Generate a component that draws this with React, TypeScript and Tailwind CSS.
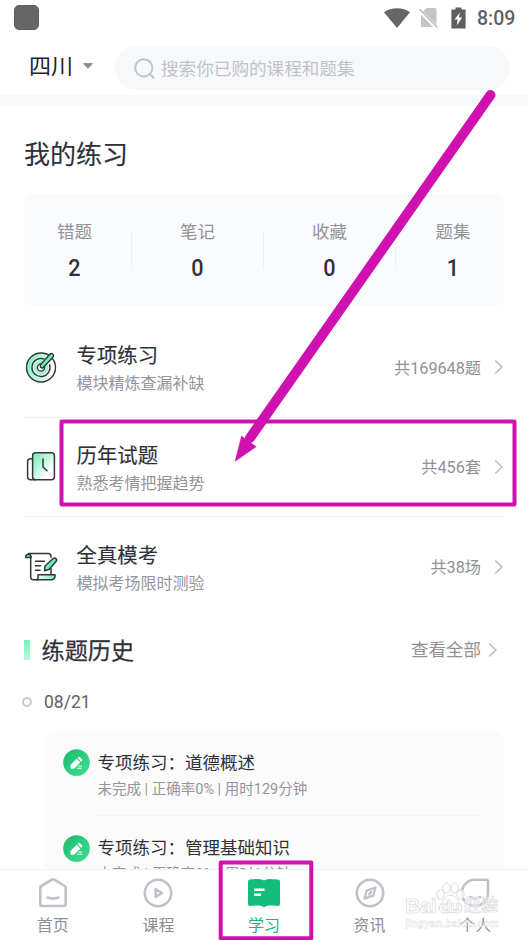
import React from "react";

const stats = [
  { label: "错题", value: 2, width: "w-[108px]", pad: "pr-1.5" },
  { label: "笔记", value: 0, width: "w-[132px]", pad: "" },
  { label: "收藏", value: 0, width: "w-[132px]", pad: "" },
  { label: "题集", value: 1, width: "w-[108px]", pad: "pl-1.5" },
];

const practices = [
  { title: "专项练习", desc: "模块精炼查漏补缺", count: "共169648题", icon: <TargetIcon /> },
  { title: "历年试题", desc: "熟悉考情把握趋势", count: "共456套", icon: <PaperIcon /> },
  { title: "全真模考", desc: "模拟考场限时测验", count: "共38场", icon: <ScrollIcon /> },
];

const history = [
  { title: "专项练习：道德概述", desc: "未完成 | 正确率0% | 用时129分钟" },
  { title: "专项练习：管理基础知识", desc: "未完成 | 正确率0% | 用时1分钟" },
];

function TargetIcon() {
  return (
    <svg width="34" height="34" viewBox="0 0 34 34" fill="none" stroke="#35363d" strokeWidth="1.4">
      <defs>
        <linearGradient id="target" x1="0" y1="0.3" x2="1" y2="0.6">
          <stop offset="0" stopColor="#7df0bd" />
          <stop offset="0.65" stopColor="#d8fbea" />
          <stop offset="0.9" stopColor="#fff" />
        </linearGradient>
      </defs>
      <circle cx="17" cy="17.5" r="14.5" fill="url(#target)" />
      <circle cx="17" cy="17.5" r="9" fill="#fff" stroke="none" />
      <circle cx="17" cy="17.5" r="5.8" stroke="#a4f5d1" strokeWidth="3.4" />
      <circle cx="17" cy="17.5" r="3.6" fill="#fff" />
      <path d="M20.5 9.2a9 9 0 1 0 4.9 5" />
      <path
        d="M16.500 14.900 25.600 4.500c1-1.100 2.400-1.100 3.300-.3.900.8.900 2.100 0 3.100L19 17.800c-1.500.9-3.600-1.200-2.500-2.900Z"
        fill="#6eedb5"
        strokeLinejoin="round"
      />
    </svg>
  );
}

function PaperIcon() {
  return (
    <svg width="34" height="34" viewBox="0 0 34 34" fill="none" stroke="#35363d" strokeWidth="1.5">
      <defs>
        <linearGradient id="paper" x1="0" y1="0" x2="1" y2="0.9">
          <stop offset="0.1" stopColor="#7df0bd" />
          <stop offset="0.8" stopColor="#fff" />
        </linearGradient>
      </defs>
      <path d="M9 8.7H6.6a3 3 0 0 0-3 3v15a3 3 0 0 0 3 3H12" fill="#fff" />
      <rect x="8.6" y="2.8" width="21.8" height="27" rx="3" fill="url(#paper)" />
      <path d="M19 9v8l4 3.8" strokeLinecap="round" strokeLinejoin="round" />
    </svg>
  );
}

function ScrollIcon() {
  return (
    <svg
      width="34"
      height="34"
      viewBox="0 0 34 34"
      fill="none"
      stroke="#35363d"
      strokeWidth="1.5"
      strokeLinecap="round"
      strokeLinejoin="round"
    >
      <defs>
        <linearGradient id="scroll" x1="0" y1="0" x2="1" y2="0">
          <stop offset="0" stopColor="#fff" />
          <stop offset="1" stopColor="#6eedb5" />
        </linearGradient>
      </defs>
      <path d="M7 7.6H1.700V6.400a2.700 2.700 0 0 1 5.300 0Z" fill="#6eedb5" />
      <path d="M4.500 3.500H24a3 3 0 0 1 3 3v.8M6.700 6.500v20.700a2.700 2.700 0 0 0 2.700 2.600H14M27 18.500V24" />
      <path d="M14 24.800h17v1.500a3.500 3.500 0 0 1-3.500 3.500h-15c1 0 1.500-.8 1.500-2Z" fill="url(#scroll)" />
      <path d="M11.500 11.300h8.800M11.500 15.700h5M11.500 20.300h4.500" />
      <path d="m20.500 20.700.5-4.700 8.100-7.500a2.100 2.100 0 0 1 3 2.900L24.900 19.500Z" fill="#6eedb5" />
    </svg>
  );
}

function Chevron({ className = "" }: { className?: string }) {
  return (
    <svg className={className} width="10" height="16" viewBox="0 0 10 16" fill="none" stroke="#c0c1c8" strokeWidth="1.7">
      <path d="m1.300 1.500 6.500 6.500-6.500 6.500" />
    </svg>
  );
}

function PencilBadge() {
  return (
    <svg width="27" height="27" viewBox="0 0 27 27">
      <defs>
        <linearGradient id="badge" x1="0" y1="0" x2="1" y2="1">
          <stop offset="0.2" stopColor="#22c276" />
          <stop offset="1" stopColor="#3de091" />
        </linearGradient>
      </defs>
      <circle cx="13.500" cy="13.500" r="13.300" fill="url(#badge)" />
      <path d="m7.500 16 6.200-6.200 3.700 3.600-6.300 6.300H8.300a.8.800 0 0 1-.8-.8Z" fill="#fff" />
      <path d="m14.500 9 .8-.8a1.200 1.200 0 0 1 1.700 0l2 2a1.200 1.200 0 0 1 0 1.700l-.8.800Z" fill="#fff" />
      <path d="M15.500 17h3.500M14 19.200h5" stroke="#fff" strokeWidth="1.100" />
    </svg>
  );
}

function StatusBar() {
  return (
    <div className="flex h-[35px] shrink-0 items-center justify-between pl-3.5 pr-3">
      <div className="h-[25px] w-[25px] rounded-[5px] border border-[#5a5d5c] bg-[#666]" />
      <div className="flex items-center">
        <svg className="ml-px" width="26" height="22" viewBox="0 0 26 22" fill="#666">
          <path d="M0 5.200C7-.2 19-.2 26 5.200L13 21Z" />
        </svg>
        <svg className="ml-[9px]" width="20" height="22" viewBox="0 0 20 22">
          <path d="M2 6.500 7.500 1H16a1.500 1.500 0 0 1 1.500 1.500V19a1 1 0 0 1-1 1H3a1 1 0 0 1-1-1Z" fill="#c4c4c4" />
          <path d="m0 3 18 18" stroke="#fff" strokeWidth="4" />
          <path d="m.5 2 18 18.500" stroke="#bdbdbd" strokeWidth="1.700" />
        </svg>
        <svg className="ml-3" width="15" height="22" viewBox="0 0 15 22">
          <path d="M1 2.500h3.500V.5h6v2H14a.6.600 0 0 1 .6.600V21a.6.600 0 0 1-.6.600H1A.6.600 0 0 1 .4 21V3.100A.6.600 0 0 1 1 2.500Z" fill="#5f5f5f" />
          <path d="M8.800 5.500 3.500 12.500h3.200L5.800 18.500l5.400-8H8Z" fill="#fff" />
        </svg>
        <span className="ml-[11px] w-[39px] pt-[3px] text-[19.500px] font-medium leading-6 text-[#5f5f5f]">8:09</span>
      </div>
    </div>
  );
}

function TabBar() {
  const line = { fill: "none", stroke: "#bfc1c9", strokeWidth: 2.6, strokeLinecap: "round", strokeLinejoin: "round" } as const;

  return (
    <nav className="grid h-[71px] shrink-0 grid-cols-5 border-t border-[#f0f0f2] bg-white text-base leading-6 text-[#8f9095]">
      <div className="flex flex-col items-center pt-[7px]">
        <svg width="32" height="32" viewBox="0 0 32 32" {...line}>
          <path d="M3.300 10.700a2 2 0 0 1 1-1.700L14.700 2.700a2.500 2.500 0 0 1 2.600 0L27.700 9a2 2 0 0 1 1 1.700V27a2 2 0 0 1-2 2H5.300a2 2 0 0 1-2-2Z" />
          <path d="M10.500 20.500c3.500 1.300 7.500 1.300 11 0" />
        </svg>
        <span className="mt-[5px]">首页</span>
      </div>
      <div className="flex flex-col items-center pt-[7px]">
        <svg width="32" height="32" viewBox="0 0 32 32" {...line}>
          <circle cx="16" cy="16" r="13.200" />
          <path d="M13.700 12v8l6.300-4Z" />
        </svg>
        <span className="mt-[5px]">课程</span>
      </div>
      <div className="flex flex-col items-center pt-[7px] text-[#17b978]">
        <svg width="34" height="32" viewBox="0 0 34 32">
          <path
            d="M1 4.500A2 2 0 0 1 3 2.500c3-.4 6-.6 8.500-.6 2.300 0 4.500.8 5.500 1.700 1-.9 3.200-1.700 5.500-1.700 2.500 0 5.500.2 8.500.6a2 2 0 0 1 2 2V27a2 2 0 0 1-2 2c-3-.5-6-.6-8.500-.6-2.300 0-4.500.7-5.500 2-1-1.300-3.200-2-5.500-2-2.500 0-5.500.1-8.500.6a2 2 0 0 1-2-2Z"
            fill="#14bc7c"
          />
          <path d="M7 12.700h10.500M7 17.800h7" stroke="#fff" strokeWidth="2.600" />
        </svg>
        <span className="mt-[5px]">学习</span>
      </div>
      <div className="flex flex-col items-center pt-[7px]">
        <svg width="32" height="32" viewBox="0 0 32 32" {...line}>
          <circle cx="16" cy="16" r="13.200" />
          <path d="m21.500 10.500-2.300 8.200-8.700 3 2.300-8.200Z" strokeWidth="2.300" />
          <path d="m17.200 14.800-2 2.500" />
        </svg>
        <span className="mt-[5px]">资讯</span>
      </div>
      <div className="flex flex-col items-center pt-[7px]">
        <svg width="32" height="32" viewBox="0 0 32 32" {...line}>
          <path d="M16 2.800h11a2 2 0 0 1 2 2V16A13.100 13.100 0 1 1 16 2.800Z" />
          <path d="M11.500 20c3 1.800 6.500 1.800 9.500 0" />
        </svg>
        <span className="mt-[5px]">个人</span>
      </div>
    </nav>
  );
}

function Watermark() {
  return (
    <div className="absolute left-[405px] top-[882px] h-[50px] w-[96px] font-['Liberation_Sans','Noto_Sans_CJK_SC',sans-serif] font-bold text-white/70 [-webkit-text-stroke:0.7px_#d8d8dc]">
      <svg className="absolute left-[31px] top-0" width="30" height="32" viewBox="0 0 30 32" fill="#fff" fillOpacity="0.75" stroke="#dadade" strokeWidth="1">
        <ellipse cx="4.500" cy="12.500" rx="3.600" ry="4.800" />
        <ellipse cx="10.500" cy="6" rx="3.600" ry="5" />
        <ellipse cx="18.500" cy="6" rx="3.600" ry="5" />
        <ellipse cx="24.500" cy="12.500" rx="3.600" ry="4.800" />
        <path d="M14.500 13c5 0 6 5 9 8 5 6 1 11-4 10-4-1-6-1-10 0-5 1-9-4-4-10 3-3 4-8 9-8Z" />
      </svg>
      <div className="flex items-center pt-[11px]">
        <span className="w-[32px] text-[21px] leading-6 tracking-[-0.5px]">Bai</span>
        <span className="relative w-[27px] pt-px text-center text-[15px] leading-6">du</span>
        <span className="whitespace-nowrap text-[17px] leading-6">经验</span>
      </div>
      <div className="-mt-px whitespace-nowrap text-[10.500px] leading-3 tracking-[0.1px] text-white/60 [-webkit-text-stroke:0.4px_#d8d8dc]">
        jingyan.baidu.com
      </div>
    </div>
  );
}

function Annotation() {
  return (
    <svg className="pointer-events-none absolute left-0 top-0" width="528" height="940" viewBox="0 0 528 940" fill="none" stroke="#cf11b0">
      <rect x="61.500" y="421.500" width="453" height="83" strokeWidth="4" strokeLinejoin="round" />
      <rect x="220.700" y="862.500" width="90.600" height="75.700" strokeWidth="4" strokeLinejoin="round" />
      <path d="M490.500 95 250 438" strokeWidth="10" strokeLinecap="round" />
      <path d="m235.200 461.300 6.300-25.300 14.700 10.700Z" fill="#cf11b0" strokeWidth="0.500" />
    </svg>
  );
}

export default function App() {
  return (
    <div className="relative flex h-[940px] w-[528px] flex-col overflow-hidden bg-white font-['Roboto','Noto_Sans_CJK_SC',sans-serif] text-[#303138]">
      <StatusBar />

      <header className="flex h-[60px] shrink-0 items-start pl-[29px] pr-[18px] pt-[11px]">
        <div className="flex h-10 w-[86px] items-center">
          <span className="pt-px text-[22px] leading-8 text-[#1d1e26]">四川</span>
          <svg className="ml-2.5" width="10" height="6" viewBox="0 0 10 6" fill="#8d8e94">
            <path d="M.8 0h8.400c.6 0 .8.600.4 1L5.600 5.300a.8.800 0 0 1-1.200 0L.4 1C0 .6.200 0 .8 0Z" />
          </svg>
        </div>
        <div className="flex h-11 flex-1 items-center rounded-full bg-[#f7f8fa] pl-[19px]">
          <svg width="21" height="21" viewBox="0 0 21 21" fill="none" stroke="#c1c3cb" strokeWidth="2" strokeLinecap="round">
            <circle cx="9.800" cy="9.800" r="8.600" />
            <path d="m16 16.300 3.500 3.500" />
          </svg>
          <span className="ml-1.5 pt-0.5 text-[17.600px] leading-6 text-[#c1c3cb]">搜索你已购的课程和题集</span>
        </div>
      </header>
      <div className="h-[11px] shrink-0 bg-[#f7f8fa]" />

      <main className="min-h-0 flex-1 overflow-hidden px-6">
        <h1 className="pt-[29px] text-[26px] leading-10 [-webkit-text-stroke:0.15px_#303138]">我的练习</h1>

        <div className="mt-[19px] flex h-28 rounded-lg bg-[#fafbfd]">
          {stats.map((s, i) => (
            <div key={s.label} className={`flex items-center ${s.width}`}>
              <div className={`flex-1 text-center ${s.pad}`}>
                <p className="text-[17.500px] leading-6 text-[#929399]">{s.label}</p>
                <p className="mt-3 scale-x-90 text-[24px] font-medium leading-6">{s.value}</p>
              </div>
              {i < 3 && <div className="h-[38px] w-px bg-[#eff0f3]" />}
            </div>
          ))}
        </div>

        <div className="pt-3">
          {practices.map((p, i) => (
            <div key={p.title} className={`flex h-[99.500px] items-center ${i < 2 ? "border-b border-[#f0f1f3]" : ""}`}>
              {p.icon}
              <div className="ml-[18.500px] flex-1 pt-1.5">
                <p className="text-[20.400px] leading-7 [-webkit-text-stroke:0.15px_#303138]">{p.title}</p>
                <p className="text-base leading-7 text-[#94959b]">{p.desc}</p>
              </div>
              <span className="pt-[3px] text-[16.200px] leading-6 text-[#909197]">{p.count}</span>
              <Chevron className="ml-[13px]" />
            </div>
          ))}
        </div>

        <div className="flex h-[67px] items-center">
          <div className="h-5 w-1.5 bg-gradient-to-b from-[#6ff5b8] to-[#b5fbdb]" />
          <h2 className="ml-[11.500px] flex-1 pt-0.5 text-[23.200px] leading-8 [-webkit-text-stroke:0.25px_#303138]">练题历史</h2>
          <span className="text-[17.500px] leading-6 text-[#909197]">查看全部</span>
          <Chevron className="ml-[7px] mr-1.5" />
        </div>

        <div className="-ml-0.5 flex h-9 items-center">
          <div className="h-2.5 w-2.5 rounded-full border-2 border-[#c9cad0]" />
          <span className="ml-3 text-[17.500px] leading-6 text-[#606166]">08/21</span>
        </div>

        <div className="ml-5 mt-[11px] h-[200px] rounded-t-xl bg-[#fbfbfc] pl-[19px] pt-[17px]">
          {history.map((h) => (
            <div key={h.title} className="flex h-[85.500px]">
              <div className="pt-[1.500px]">
                <PencilBadge />
              </div>
              <div className="ml-1 mr-6 h-[68px] flex-1 border-b border-[#f5f5f7] pl-[3.500px] pt-px">
                <p className="text-[17.500px] leading-7">{h.title}</p>
                <p className="pt-px text-[14.500px] leading-6 text-[#94959b]">{h.desc}</p>
              </div>
            </div>
          ))}
        </div>
      </main>

      <TabBar />
      <Watermark />
      <Annotation />
    </div>
  );
}
